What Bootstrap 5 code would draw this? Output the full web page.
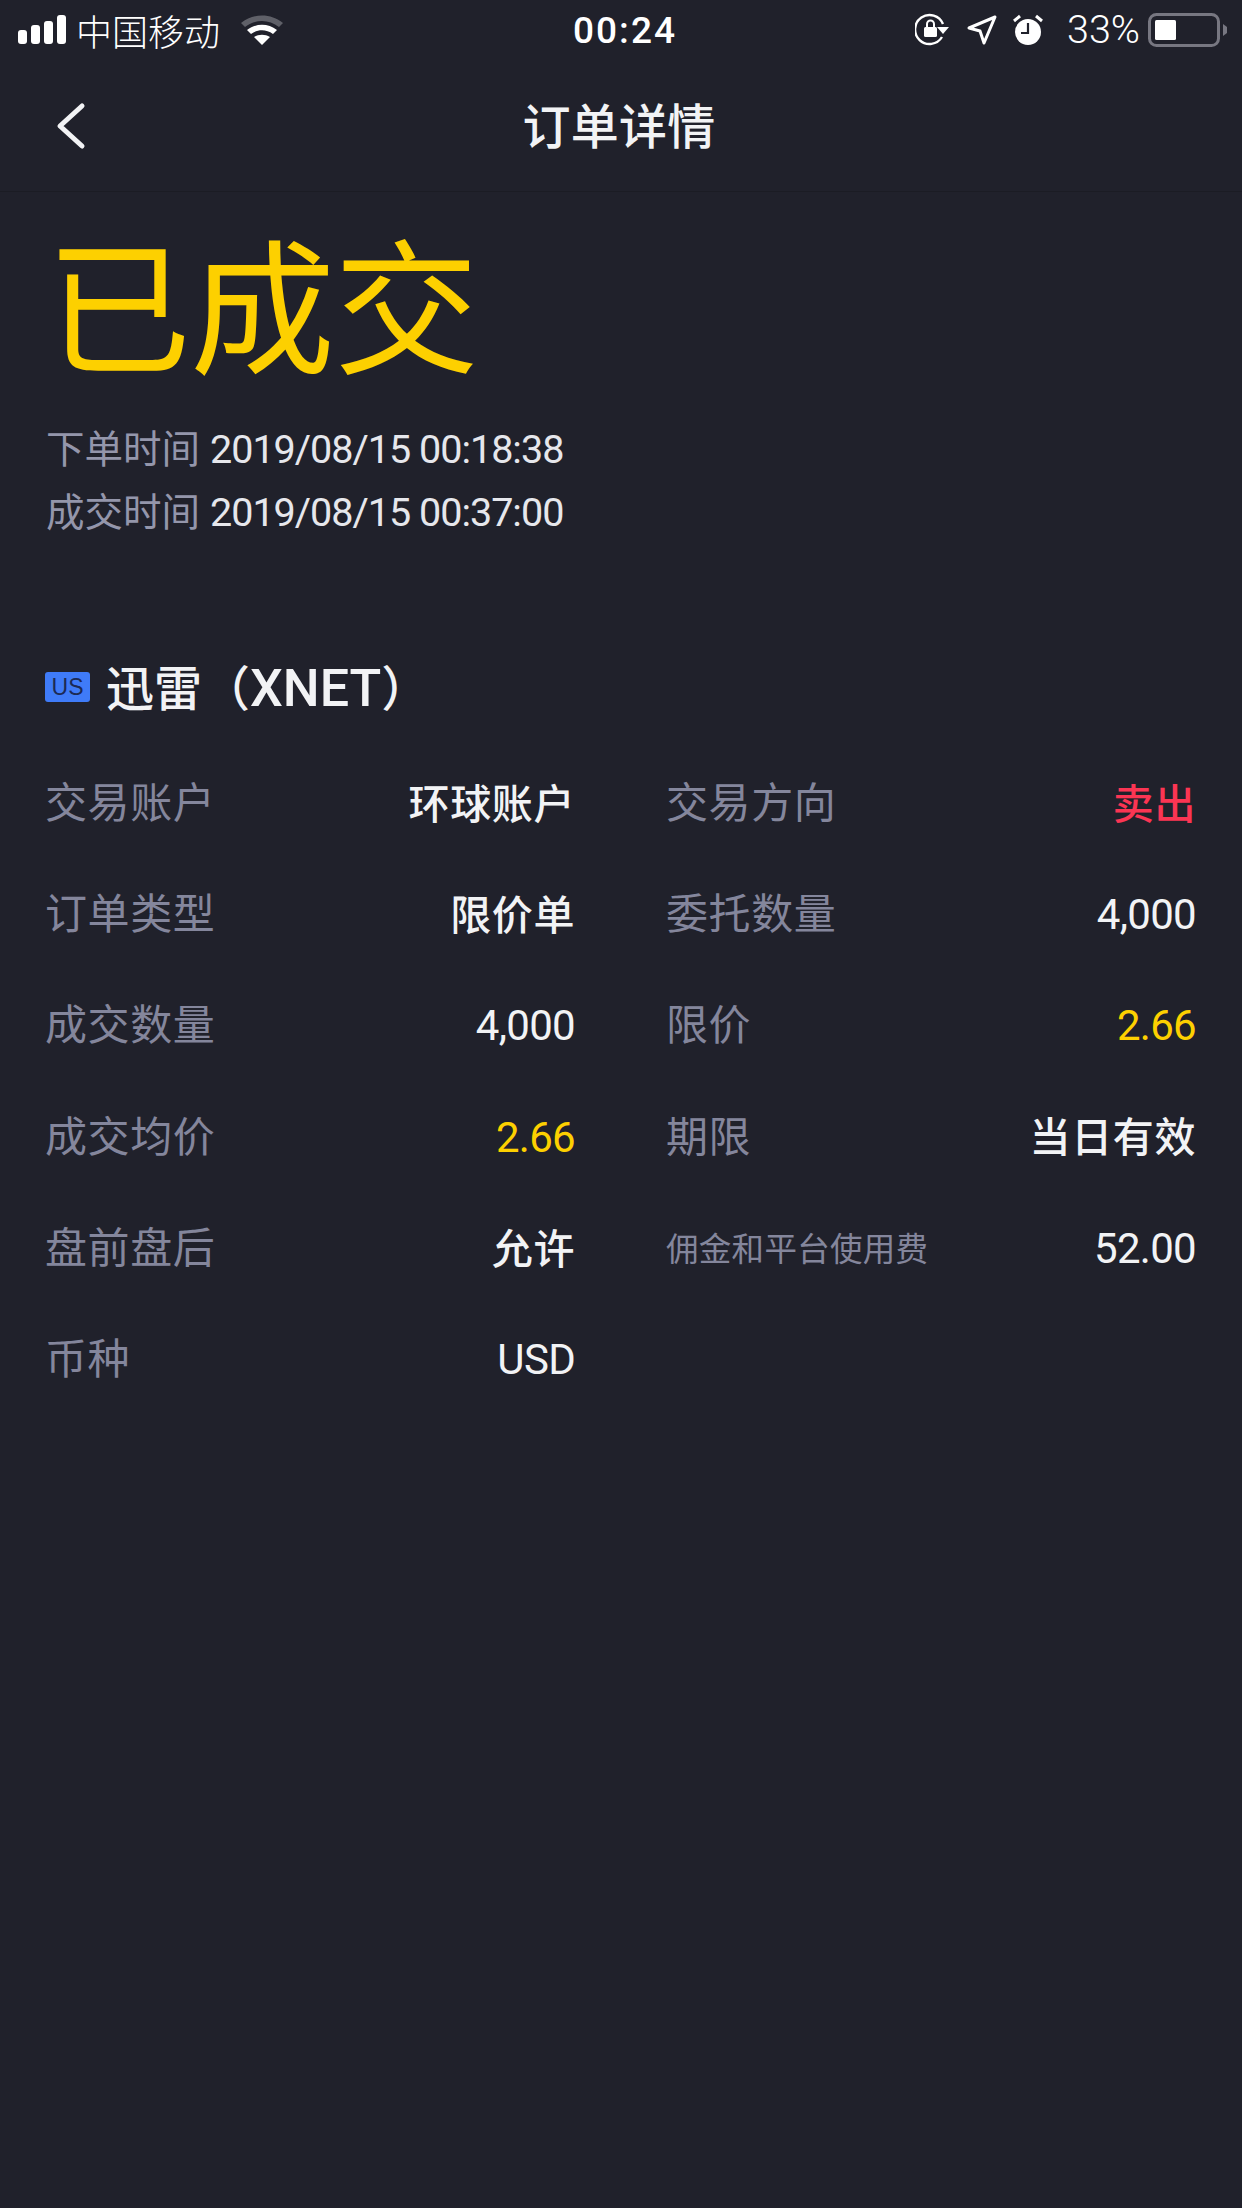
<!DOCTYPE html>
<html lang="zh">
<head>
<meta charset="utf-8">
<title>订单详情</title>
<link rel="stylesheet" href="https://cdn.jsdelivr.net/npm/bootstrap@5.3.0/dist/css/bootstrap.min.css">
<style>
html,body{height:2208px;}
body{background:#20212b;color:#f2f3f5;font-family:Roboto,"Noto Sans CJK SC",sans-serif;overflow:hidden;}
.sbar{height:60px;padding:0 14px 0 18px;font-size:36px;color:#fff;position:relative;}
.sbar-name{font-family:"Noto Sans CJK SC",sans-serif;font-weight:300;font-size:36px;line-height:1;margin-left:10px;}
.wifi-ic{margin-left:20px;}
.sbar-time{position:absolute;left:0;right:0;top:9px;margin-left:8px;text-align:center;font-size:37px;line-height:44px;font-weight:500;letter-spacing:2px;}
.sbar-pct{font-size:39.5px;font-weight:300;margin:0 8px 0 0;line-height:1;}
.topbar{height:132px;border-bottom:1px solid #1b1c24;position:relative;}
.topbar-title{font-family:"Noto Sans CJK SC",sans-serif;font-size:48px;font-weight:500;color:#f2f3f5;line-height:1;margin-bottom:6px;margin-right:4px;letter-spacing:.3px;}
.topbar-back{position:absolute;left:54px;top:42px;}
.state{padding:13px 0 0 46px;}
.state-title{font-family:"Noto Sans CJK SC",sans-serif;font-size:145px;line-height:190px;color:#fdd000;font-weight:400;letter-spacing:-1px;}
.times{margin-top:23px;font-size:39.5px;color:#e6e7ec;letter-spacing:-1px;}
.times-line{height:63px;}
.times-key{font-family:"Noto Sans CJK SC",sans-serif;color:#9496ab;font-size:38.5px;margin-right:10px;letter-spacing:0;}
.stock{margin:111px 0 0 45px;height:64px;}
.flag{width:45px;height:30px;background:#3f7bf8;border-radius:3px;color:#1c2a55;font:400 23px/30px "Liberation Sans",sans-serif;text-align:center;margin-right:16px;}
.stock-name{font-size:48px;line-height:64px;font-family:"Noto Sans CJK SC",sans-serif;font-weight:500;color:#f2f3f5;}
.stock-name b{font-family:Roboto,sans-serif;font-weight:500;font-size:52px;}
.grid-wrap{margin:27px 46px 0 46px;display:grid;grid-template-columns:529px 529px;column-gap:92px;grid-auto-rows:111.2px;}
.cellrow{align-items:center;}
.key{font-family:"Noto Sans CJK SC",sans-serif;font-size:42px;color:#84869c;font-weight:400;letter-spacing:.6px;margin:0 0 4px -1px;}
.key-small{font-size:32.5px;letter-spacing:.3px;margin:2px 0 0 -1px;}
.val{font-size:42px;font-weight:400;color:#f2f3f5;letter-spacing:-.7px;margin-top:4px;}
.val-cn{font-family:"Noto Sans CJK SC",sans-serif;font-size:41px;font-weight:500;letter-spacing:.6px;margin-top:0;}
.val-yellow{color:#fdd000;}
.val-red{color:#fb3553;}
</style>
</head>
<body>
<div class="sbar d-flex align-items-center">
  <svg width="48" height="30" viewBox="0 0 48 30"><g fill="#fff"><rect x="0" y="15" width="9" height="14" rx="3"/><rect x="13" y="10" width="9" height="19" rx="3"/><rect x="26" y="6" width="9" height="23" rx="3"/><rect x="39" y="0" width="9" height="29" rx="3"/></g></svg>
  <span class="sbar-name">中国移动</span>
  <svg class="wifi-ic" width="44" height="32" viewBox="0 0 44 32"><path d="M1 9C13-1 31-1 43 9l-4 4C29 5 15 5 5 13z" fill="#5f6068"/><path d="M7 16c9-7 21-7 30 0l-4 4c-7-5-15-5-22 0zM14 23c5-3 11-3 16 0l-8 8z" fill="#fff"/></svg>
  <div class="sbar-time">00:24</div>
  <div class="ms-auto d-flex align-items-center">
    <svg width="36" height="34" viewBox="0 0 36 34" class="me-3"><path d="M27 24a14.500 14.500 0 1 1 1-13" fill="none" stroke="#fff" stroke-width="2.400"/><path d="M22 14h12l-6 7z" fill="#fff"/><rect x="9" y="14" width="13" height="10" rx="1.500" fill="#fff"/><path d="M12 14v-3a3.500 3.500 0 0 1 7 0v3" fill="none" stroke="#fff" stroke-width="2"/></svg>
    <svg width="30" height="30" viewBox="0 0 30 30" class="me-3"><path d="M28 2 17 28l-4-12L2 13z" fill="none" stroke="#fff" stroke-width="3" stroke-linejoin="round"/></svg>
    <svg width="30" height="32" viewBox="0 0 30 32" class="me-4"><circle cx="15" cy="18" r="13" fill="#fff"/><path d="M15 9v10H8" fill="none" stroke="#20212b" stroke-width="2.200"/><path d="M1 7l6-5M29 7l-6-5" stroke="#fff" stroke-width="3"/></svg>
    <span class="sbar-pct">33%</span>
    <svg width="80" height="34" viewBox="0 0 80 34"><rect x="1.500" y="1.500" width="69" height="31" rx="7" fill="none" stroke="#777781" stroke-width="3"/><rect x="7" y="7" width="21" height="20" rx="1.500" fill="#fff"/><path d="M75 11l4 3v6l-4 3z" fill="#777781"/></svg>
  </div>
</div>
<div class="topbar d-flex align-items-center justify-content-center">
  <svg class="topbar-back" width="32" height="48" viewBox="0 0 32 48"><path d="M28 4 6 24l22 20" fill="none" stroke="#f2f3f5" stroke-width="5" stroke-linecap="round" stroke-linejoin="round"/></svg>
  <div class="topbar-title">订单详情</div>
</div>
<div class="state">
  <div class="state-title">已成交</div>
  <div class="times">
    <div class="times-line"><span class="times-key">下单时间</span>2019/08/15 00:18:38</div>
    <div class="times-line"><span class="times-key">成交时间</span>2019/08/15 00:37:00</div>
  </div>
</div>
<div class="stock d-flex align-items-center">
  <div class="flag">US</div>
  <div class="stock-name">迅雷（<b>XNET</b>）</div>
</div>
<div class="grid-wrap">
  <div class="d-flex justify-content-between cellrow"><span class="key">交易账户</span><span class="val val-cn">环球账户</span></div>
  <div class="d-flex justify-content-between cellrow"><span class="key">交易方向</span><span class="val val-cn val-red">卖出</span></div>
  <div class="d-flex justify-content-between cellrow"><span class="key">订单类型</span><span class="val val-cn">限价单</span></div>
  <div class="d-flex justify-content-between cellrow"><span class="key">委托数量</span><span class="val">4,000</span></div>
  <div class="d-flex justify-content-between cellrow"><span class="key">成交数量</span><span class="val">4,000</span></div>
  <div class="d-flex justify-content-between cellrow"><span class="key">限价</span><span class="val val-yellow">2.66</span></div>
  <div class="d-flex justify-content-between cellrow"><span class="key">成交均价</span><span class="val val-yellow">2.66</span></div>
  <div class="d-flex justify-content-between cellrow"><span class="key">期限</span><span class="val val-cn">当日有效</span></div>
  <div class="d-flex justify-content-between cellrow"><span class="key">盘前盘后</span><span class="val val-cn">允许</span></div>
  <div class="d-flex justify-content-between cellrow"><span class="key key-small">佣金和平台使用费</span><span class="val">52.00</span></div>
  <div class="d-flex justify-content-between cellrow"><span class="key">币种</span><span class="val">USD</span></div>
</div>
<script src="https://cdn.jsdelivr.net/npm/bootstrap@5.3.0/dist/js/bootstrap.bundle.min.js"></script>
</body>
</html>
